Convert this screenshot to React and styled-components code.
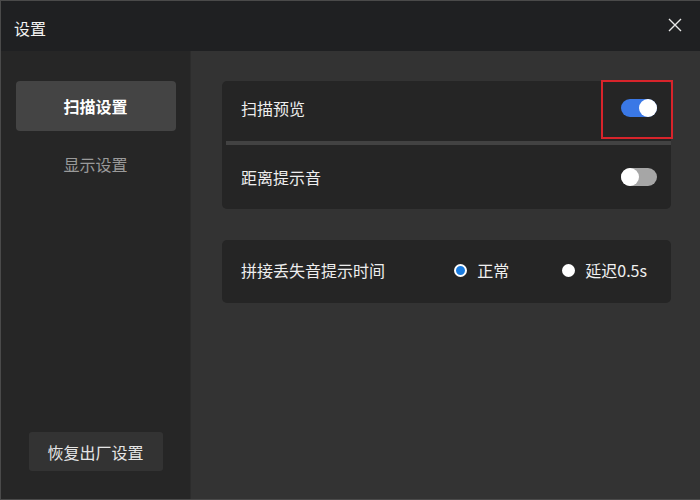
import React, { useState } from 'react';
import styled, { createGlobalStyle } from 'styled-components';

const GlobalStyle = createGlobalStyle`
  html, body {
    margin: 0;
    padding: 0;
    background: #333333;
  }
  body {
    font-family: "Noto Sans CJK SC", "Noto Sans", sans-serif;
  }
  * { box-sizing: border-box; }
`;

function App() {
  const [preview, setPreview] = useState(true);
  const [beep, setBeep] = useState(false);
  const [delay, setDelay] = useState('normal');

  return (
    <>
      <GlobalStyle />
      <Window>
        <TitleBar>
          <Title>设置</Title>
          <CloseButton aria-label="close">
            <svg width="14" height="14" viewBox="0 0 14 14">
              <path d="M1 1 L13 13 M13 1 L1 13" stroke="#e8e8e8" strokeWidth="1.4" fill="none" />
            </svg>
          </CloseButton>
        </TitleBar>
        <Body>
          <Sidebar>
            <NavList>
              <NavItem $active>扫描设置</NavItem>
              <NavItem>显示设置</NavItem>
            </NavList>
            <ResetButton>恢复出厂设置</ResetButton>
          </Sidebar>
          <Main>
            <Card>
              <Row $h={54} $mb={6}>
                <Label>扫描预览</Label>
                <Switch $on={preview} onClick={() => setPreview(!preview)}>
                  <Knob $on={preview} />
                </Switch>
              </Row>
              <Divider />
              <Row $h={64}>
                <Label>距离提示音</Label>
                <Switch $on={beep} onClick={() => setBeep(!beep)}>
                  <Knob $on={beep} />
                </Switch>
              </Row>
              <Highlight />
            </Card>
            <Card>
              <Row $h={63} $pb={3}>
                <Label>拼接丢失音提示时间</Label>
                <RadioGroup>
                  <RadioOption onClick={() => setDelay('normal')}>
                    <RadioDot $checked={delay === 'normal'} />
                    正常
                  </RadioOption>
                  <RadioOption onClick={() => setDelay('delay')}>
                    <RadioDot $checked={delay === 'delay'} />
                    延迟0.5s
                  </RadioOption>
                </RadioGroup>
              </Row>
            </Card>
          </Main>
        </Body>
      </Window>
    </>
  );
}

export default App;

const Window = styled.div`
  width: 700px;
  height: 500px;
  display: flex;
  flex-direction: column;
  border: 1px solid #4a4a4a;
  border-right: none;
  background: #333333;
  overflow: hidden;
`;

const TitleBar = styled.div`
  height: 50px;
  flex-shrink: 0;
  display: flex;
  align-items: center;
  justify-content: space-between;
  padding: 0 0 0 13px;
  background: #1f2022;
`;

const Title = styled.div`
  color: #f2f2f2;
  font-size: 16px;
  padding-top: 3px;
`;

const CloseButton = styled.div`
  width: 40px;
  height: 40px;
  display: flex;
  align-items: center;
  justify-content: center;
  margin-right: 5px;
  margin-top: -2px;
  cursor: pointer;
`;

const Body = styled.div`
  flex: 1;
  display: flex;
  min-height: 0;
`;

const Sidebar = styled.div`
  width: 190px;
  flex-shrink: 0;
  background: #262626;
  border-right: 1px solid #2c2c2c;
  display: flex;
  flex-direction: column;
  justify-content: space-between;
  align-items: center;
  padding: 30px 0 28px;
`;

const NavList = styled.div`
  display: flex;
  flex-direction: column;
  gap: 6px;
  align-items: center;
`;

const NavItem = styled.div`
  width: 160px;
  height: 50px;
  display: flex;
  align-items: center;
  justify-content: center;
  border-radius: 4px;
  background: ${p => (p.$active ? '#444444' : 'transparent')};
  color: ${p => (p.$active ? '#ffffff' : '#9a9a9a')};
  font-size: 16px;
  font-weight: ${p => (p.$active ? 600 : 400)};
  padding-top: ${p => (p.$active ? '0' : '4px')};
  cursor: pointer;
`;

const ResetButton = styled.div`
  width: 134px;
  height: 39px;
  display: flex;
  align-items: center;
  justify-content: center;
  border-radius: 3px;
  background: #333333;
  color: #e6e6e6;
  font-size: 16px;
  cursor: pointer;
`;

const Main = styled.div`
  flex: 1;
  padding: 30px 29px 0 31px;
  display: flex;
  flex-direction: column;
  gap: 31px;
`;

const Card = styled.div`
  position: relative;
  background: #252525;
  border-radius: 5px;
  display: flex;
  flex-direction: column;
`;

const Row = styled.div`
  height: ${p => p.$h}px;
  margin-bottom: ${p => p.$mb || 0}px;
  padding-bottom: ${p => p.$pb || 0}px;
  display: flex;
  align-items: center;
  justify-content: space-between;
  padding-left: 19px;
  padding-right: 14px;
`;

const Label = styled.div`
  color: #eeeeee;
  font-size: 16px;
`;

const Divider = styled.div`
  height: 4px;
  margin-left: 4px;
  background: #424242;
`;

const Switch = styled.div`
  width: 36px;
  height: 18px;
  border-radius: 9px;
  background: ${p => (p.$on ? '#3a78e6' : '#a6a6a6')};
  display: flex;
  align-items: center;
  justify-content: ${p => (p.$on ? 'flex-end' : 'flex-start')};
  cursor: pointer;
`;

const Knob = styled.div`
  width: 18px;
  height: 18px;
  border-radius: 50%;
  background: #ffffff;
`;

const Highlight = styled.div`
  position: absolute;
  left: 379px;
  top: -1px;
  width: 72px;
  height: 59px;
  border: 2px solid #d8242b;
  pointer-events: none;
`;

const RadioGroup = styled.div`
  display: flex;
  align-items: center;
  gap: 53px;
  margin-right: 10px;
`;

const RadioOption = styled.div`
  display: flex;
  align-items: center;
  gap: 10px;
  color: #f0f0f0;
  font-size: 16px;
  cursor: pointer;
`;

const RadioDot = styled.span`
  width: 13px;
  height: 13px;
  border-radius: 50%;
  background: ${p => (p.$checked ? '#1a7ce0' : '#ffffff')};
  border: 2px solid #ffffff;
  flex-shrink: 0;
`;
